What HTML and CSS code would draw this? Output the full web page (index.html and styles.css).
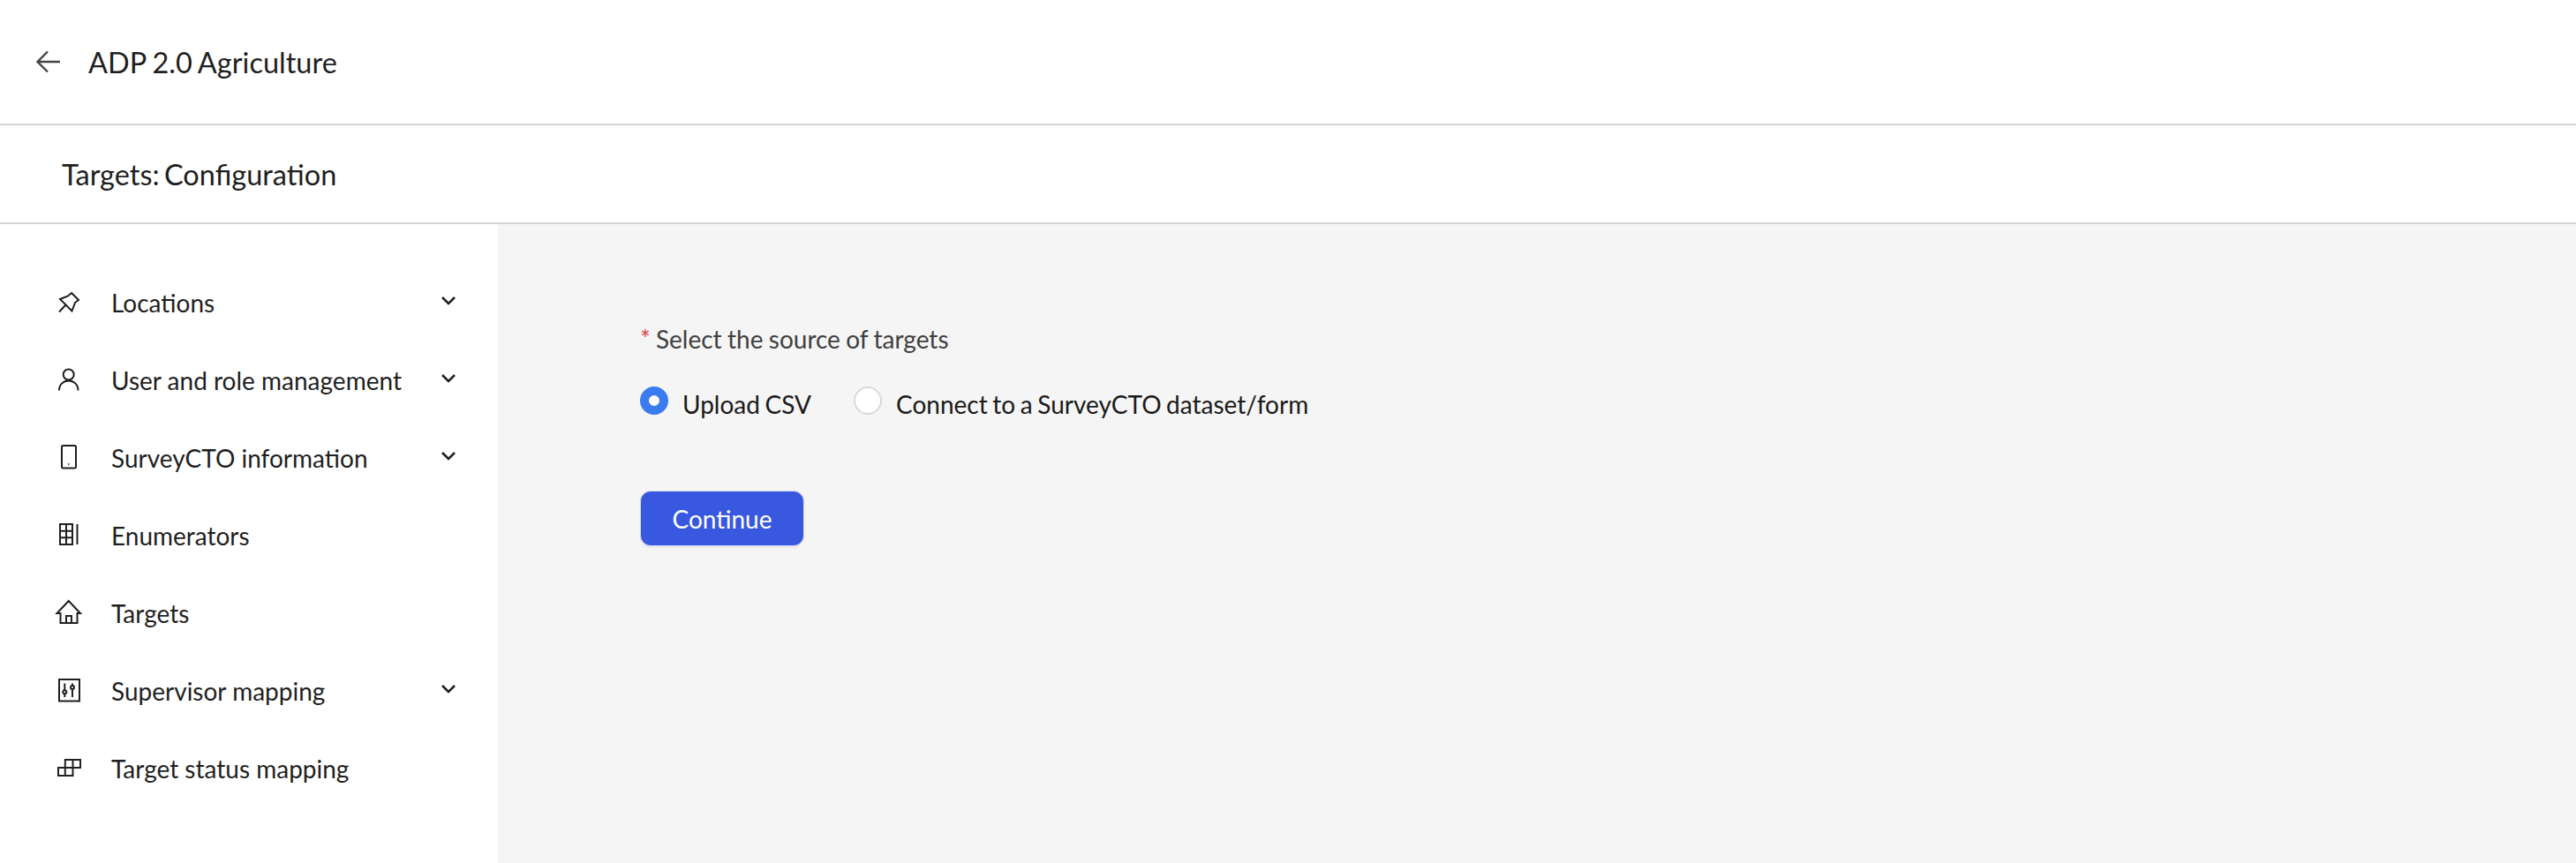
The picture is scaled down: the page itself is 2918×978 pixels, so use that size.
FILE: index.html
```html
<!DOCTYPE html>
<html lang="en">
<head>
    <meta charset="UTF-8">
    <title>Targets: Configuration</title>
    <link rel="stylesheet" href="styles.css">
</head>
<body>
    <header class="top-bar">
        <svg class="back-icon" viewBox="0 0 30 30"><path d="M28 15H3M14 3.500 2.500 15 14 26.500"/></svg>
        <h1>ADP 2.0 Agriculture</h1>
    </header>
    <div class="sub-bar">
        <h2>Targets: Configuration</h2>
    </div>
    <div class="main">
        <nav class="sidebar">
            <div class="nav-item">
                <svg class="nav-icon" viewBox="0 0 24 24"><path d="M15 1 23 9 19 12 15.500 21.500 2 8 11 4.500ZM8 15 1 22.500"/></svg>
                <span class="nav-label">Locations</span>
                <svg class="chevron" viewBox="0 0 16 10"><path d="M1 1 8 8 15 1"/></svg>
            </div>
            <div class="nav-item">
                <svg class="nav-icon" viewBox="0 0 24 24"><circle cx="11.700" cy="5.500" r="6"/><path d="M1 23.500C1 16.500 6 12.500 11.700 12.500S22.500 16.500 22.500 23.500"/></svg>
                <span class="nav-label">User and role management</span>
                <svg class="chevron" viewBox="0 0 16 10"><path d="M1 1 8 8 15 1"/></svg>
            </div>
            <div class="nav-item">
                <svg class="nav-icon" viewBox="0 0 24 24"><rect x="4" y="-2" width="16" height="25.500" rx="1.500"/><path d="M11.200 19h1.200"/></svg>
                <span class="nav-label">SurveyCTO information</span>
                <svg class="chevron" viewBox="0 0 16 10"><path d="M1 1 8 8 15 1"/></svg>
            </div>
            <div class="nav-item">
                <svg class="nav-icon" viewBox="0 0 24 24"><path d="M2 -1H16V22H2ZM2 6.700H16M2 14.300H16M9 -1V22M21.500 -1V22"/></svg>
                <span class="nav-label">Enumerators</span>
            </div>
            <div class="nav-item">
                <svg class="nav-icon" viewBox="0 0 24 24"><path d="M11.800 -2 -1.500 12H2.500V23H21.500V12H25ZM9 23V15H15V23"/></svg>
                <span class="nav-label">Targets</span>
            </div>
            <div class="nav-item">
                <svg class="nav-icon" viewBox="0 0 24 24"><rect x="1" y="-1" width="23" height="24.500"/><path d="M7.300 3.500V11M7.300 15.500V19M16 3.500V6M16 10V19"/><circle cx="7.300" cy="13.300" r="2"/><circle cx="16" cy="8" r="2"/></svg>
                <span class="nav-label">Supervisor mapping</span>
                <svg class="chevron" viewBox="0 0 16 10"><path d="M1 1 8 8 15 1"/></svg>
            </div>
            <div class="nav-item">
                <svg class="nav-icon" viewBox="0 0 24 24"><path d="M0 11H16.500V20H0ZM7.800 20V2H25V11H16.500M16.500 2V11"/></svg>
                <span class="nav-label">Target status mapping</span>
            </div>
        </nav>
        <section class="content">
            <p class="field-label"><span class="required">*</span>Select the source of targets</p>
            <div class="radio-group">
                <label class="radio-option">
                    <span class="radio radio-checked"></span>
                    <span>Upload CSV</span>
                </label>
                <label class="radio-option">
                    <span class="radio"></span>
                    <span>Connect to a SurveyCTO dataset/form</span>
                </label>
            </div>
            <button class="btn-continue">Continue</button>
        </section>
    </div>
</body>
</html>
```

FILE: styles.css
```css
html, body {
    height: 100%;
}

body {
    margin: 0;
    font-family: Lato, "Open Sans", sans-serif;
    color: #1f1f1f;
    background-color: #fff;
    display: flex;
    flex-direction: column;
    overflow: hidden;
}

svg {
    fill: none;
    stroke: currentColor;
    flex-shrink: 0;
    overflow: visible;
}

.top-bar {
    height: 140px;
    display: flex;
    align-items: center;
    padding-left: 40px;
    border-bottom: 2px solid #d4d4d4;
    flex-shrink: 0;
}

.back-icon {
    width: 30px;
    height: 30px;
    stroke-width: 2.4;
    color: #444;
    margin-right: 30px;
}

h1 {
    margin: 0;
    font-size: 32.500px;
    font-weight: 400;
    word-spacing: -1.200px;
}

.sub-bar {
    height: 110px;
    display: flex;
    align-items: center;
    padding-left: 70px;
    border-bottom: 2px solid #d4d4d4;
    flex-shrink: 0;
}

h2 {
    margin: 0;
    font-size: 32.500px;
    font-weight: 400;
    word-spacing: -3px;
}

.main {
    flex: 1;
    display: flex;
}

.sidebar {
    width: 564px;
    padding-top: 45px;
    box-sizing: border-box;
    flex-shrink: 0;
}

.nav-item {
    height: 88px;
    display: flex;
    align-items: center;
    padding-left: 66px;
    font-size: 28px;
}

.nav-icon {
    width: 24px;
    height: 24px;
    stroke-width: 2;
    margin-right: 36px;
}

.nav-label {
    flex: 1;
}

.chevron {
    width: 16px;
    height: 10px;
    stroke-width: 2.600;
    margin: 0 48px 4px 0;
}

.content {
    flex: 1;
    background-color: #f5f5f5;
    padding: 112px 0 0 161px;
}

.field-label {
    margin: 0;
    font-size: 28px;
    line-height: 36px;
    color: #404040;
    word-spacing: -0.800px;
}

.required {
    color: #e5484d;
    font-size: 28px;
    margin-right: 6px;
}

.radio-group {
    display: flex;
    gap: 48px;
    margin-top: 36px;
}

.radio-option {
    display: flex;
    align-items: flex-start;
    gap: 16px;
    font-size: 28px;
    line-height: 41px;
    color: #1a1a1a;
    word-spacing: -1.600px;
}

.radio {
    width: 32px;
    height: 32px;
    box-sizing: border-box;
    border: 2px solid #d9d9d9;
    border-radius: 50%;
    background-color: #fff;
}

.radio-checked {
    border: 10px solid #3b7bf0;
}

.btn-continue {
    display: block;
    margin-top: 77px;
    width: 186px;
    height: 63px;
    font-family: inherit;
    font-size: 28px;
    color: #fff;
    background-color: #3858e0;
    border: 1px solid #d6dcf5;
    border-radius: 12px;
    box-shadow: 0 2px 2px rgba(0, 0, 0, 0.04);
}
```
